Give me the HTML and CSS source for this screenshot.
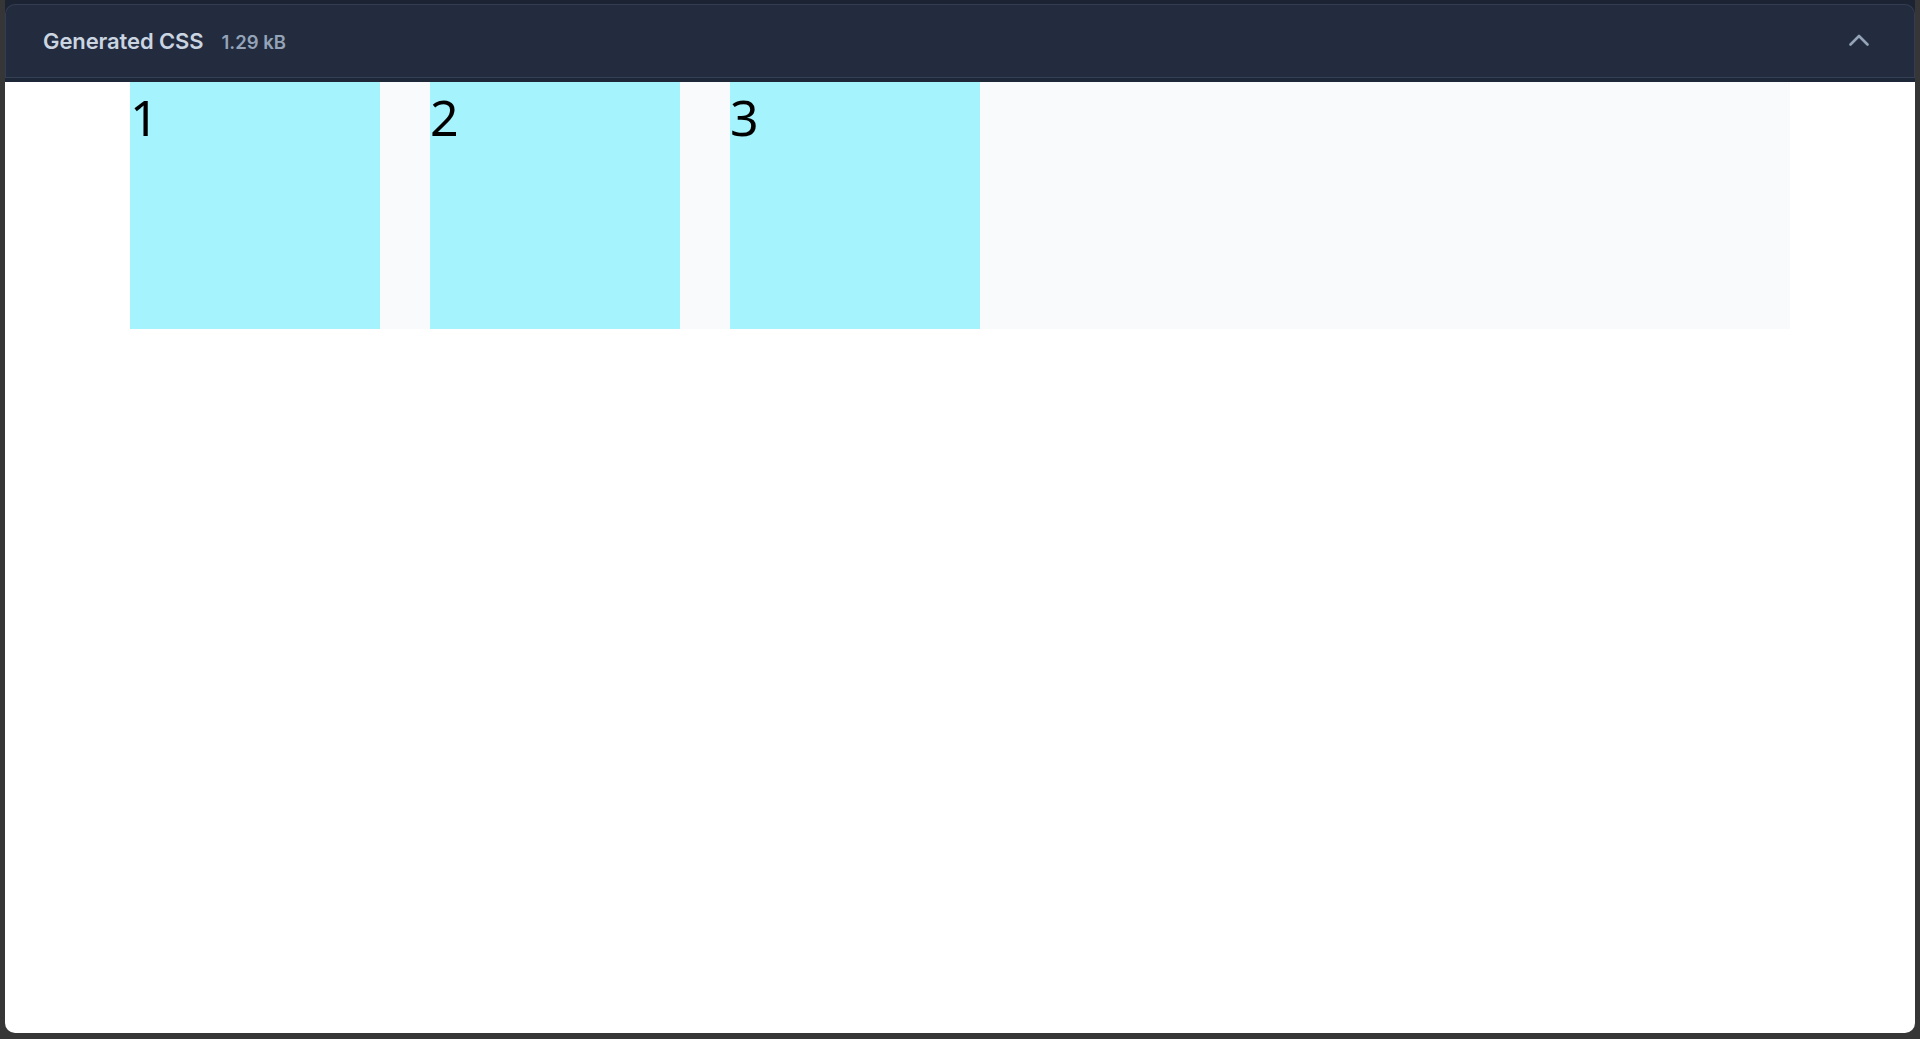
FILE: index.html
```html
<!DOCTYPE html>
<html lang="en">
<head>
<meta charset="utf-8">
<title>Generated CSS</title>
<link rel="stylesheet" href="styles.css">
</head>
<body>
<div class="frame">
  <div class="head-wrap">
    <div class="header">
      <div class="title-group">
        <span class="title">Generated CSS</span>
        <span class="size">1.29 kB</span>
      </div>
      <svg class="chevron" width="20" height="12" viewBox="0 0 20 12" aria-hidden="true">
        <polyline points="1.5,10.5 10,2 18.5,10.5" fill="none" stroke="#94a3b8" stroke-width="2.6" stroke-linecap="round" stroke-linejoin="round"/>
      </svg>
    </div>
    <div class="head-line"></div>
  </div>
  <div class="preview">
    <div class="grid">
      <div class="item">1</div>
      <div class="item">2</div>
      <div class="item">3</div>
    </div>
  </div>
</div>
</body>
</html>
```

FILE: styles.css
```css
html, body {
  margin: 0;
  padding: 0;
  height: 100%;
}
body {
  background: #363636;
  overflow: hidden;
}
.frame {
  margin: 0 5px;
  height: 1033px;
  background: #ffffff;
  border-radius: 0 0 10px 10px;
  overflow: hidden;
  display: flex;
  flex-direction: column;
}
.head-wrap {
  background: #1c2434;
  padding-top: 4px;
}
.header {
  height: 73px;
  box-sizing: border-box;
  background: #222c3e;
  border: 1px solid #323d51;
  border-bottom: none;
  border-radius: 10px 10px 0 0;
  display: flex;
  align-items: center;
  justify-content: space-between;
  padding: 0 45px 1px 37px;
  font-family: Inter, "Noto Sans", sans-serif;
}
.head-line {
  height: 1px;
  background: #344056;
  border-bottom: 4px solid #1e2738;
}
.title-group {
  display: flex;
  align-items: baseline;
  gap: 18px;
}
.title {
  color: #cbd5e1;
  font-size: 22px;
  font-weight: 600;
  letter-spacing: -0.1px;
}
.size {
  color: #94a3b8;
  font-size: 18.5px;
  font-weight: 600;
}
.chevron {
  display: block;
  margin-top: -2px;
}
.preview {
  flex: 1;
}
.grid {
  width: 1660px;
  height: 247px;
  margin: 0 auto;
  background: #f9fafb;
  display: flex;
  gap: 50px;
}
.item {
  width: 250px;
  background: #a5f3fc;
  color: #000;
  font-family: "Noto Sans", "Open Sans", sans-serif;
  font-size: 50px;
  line-height: 1.42;
}
```
